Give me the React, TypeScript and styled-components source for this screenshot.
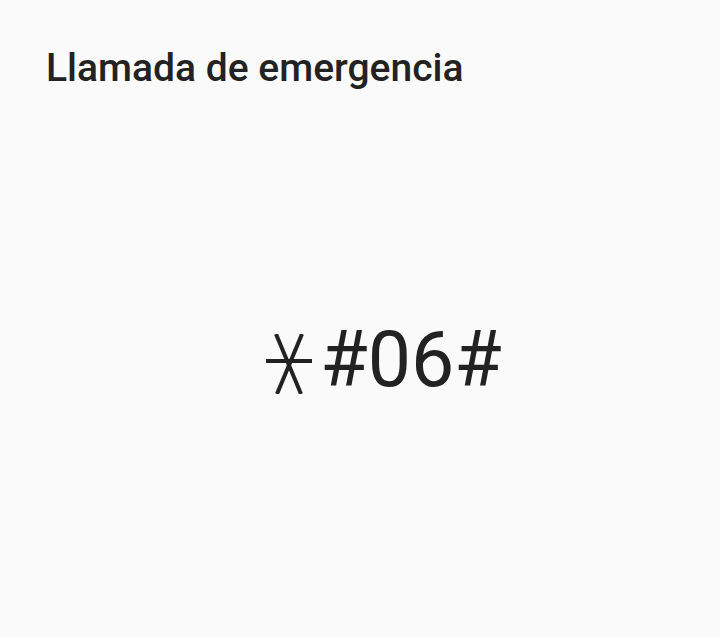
import React from 'react'
import styled, { createGlobalStyle } from 'styled-components'

const GlobalStyle = createGlobalStyle`
  html, body {
    margin: 0;
    padding: 0;
    background: #fafafa;
  }
  #root {
    height: 100vh;
  }
`

const Screen = styled.div`
  height: 100%;
  display: flex;
  flex-direction: column;
  background: #fafafa;
  font-family: Roboto, 'Noto Sans', sans-serif;
  color: #222222;
`

const Header = styled.header`
  padding: 44px 46px 0 46px;
`

const Title = styled.h1`
  margin: 0;
  font-size: 39px;
  font-weight: 500;
  line-height: 48px;
  letter-spacing: 0;
  color: #222222;
`

const Dial = styled.div`
  flex: 1;
  display: flex;
  align-items: flex-start;
  justify-content: center;
  padding-top: 230px;
  padding-left: 48px;
`

const Number = styled.div`
  display: flex;
  align-items: flex-start;
  gap: 8px;
  font-size: 77px;
  font-weight: 400;
  line-height: 1;
  color: #222222;
`

const Star = styled.svg`
  width: 46px;
  height: 60px;
  margin-top: 12px;
  flex: none;
`

function StarGlyph() {
  return (
    <Star viewBox="0 0 46 60" aria-label="*">
      <g stroke="#222222" strokeWidth="4" strokeLinecap="butt" fill="none">
        <line x1="0" y1="27" x2="46" y2="27" />
        <line x1="10" y1="0" x2="35" y2="60" />
        <line x1="36" y1="0" x2="11" y2="60" />
      </g>
    </Star>
  )
}

export default function App() {
  return (
    <>
      <GlobalStyle />
      <Screen>
        <Header>
          <Title>Llamada de emergencia</Title>
        </Header>
        <Dial>
          <Number>
            <StarGlyph />
            <span>#06#</span>
          </Number>
        </Dial>
      </Screen>
    </>
  )
}
